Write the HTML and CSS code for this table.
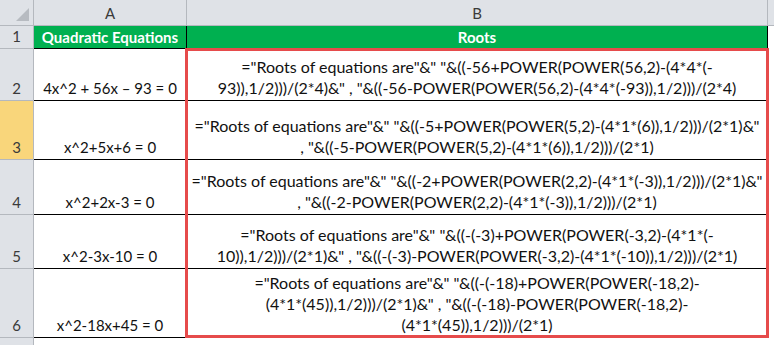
FILE: index.html
```html
<!DOCTYPE html>
<html lang="en">
<head>
  <meta charset="UTF-8">
  <meta name="viewport" content="width=device-width, initial-scale=1.0">
  <title>Quadratic Equations</title>
  <link rel="stylesheet" href="styles.css">
</head>
<body>

  <!-- Spreadsheet -->
  <div class="sheet">
    <div class="corner"><span class="corner-mark"></span></div>
    <div class="col-head">A</div>
    <div class="col-head">B</div>
    <div class="col-head col-rest"></div>

    <div class="row-head">1</div>
    <div class="cell title">Quadratic Equations</div>
    <div class="cell title">Roots</div>
    <div class="cell rest"></div>

    <div class="row-head">2</div>
    <div class="cell eq">4x^2 + 56x – 93 = 0</div>
    <div class="cell formula">="Roots of equations are"&amp;" "&amp;((-56+POWER(POWER(56,2)-(4*4*(-<br>93)),1/2)))/(2*4)&amp;" , "&amp;((-56-POWER(POWER(56,2)-(4*4*(-93)),1/2)))/(2*4)</div>
    <div class="cell rest"></div>

    <div class="row-head selected">3</div>
    <div class="cell eq">x^2+5x+6 = 0</div>
    <div class="cell formula">="Roots of equations are"&amp;" "&amp;((-5+POWER(POWER(5,2)-(4*1*(6)),1/2)))/(2*1)&amp;"<br>, "&amp;((-5-POWER(POWER(5,2)-(4*1*(6)),1/2)))/(2*1)</div>
    <div class="cell rest"></div>

    <div class="row-head">4</div>
    <div class="cell eq">x^2+2x-3 = 0</div>
    <div class="cell formula">="Roots of equations are"&amp;" "&amp;((-2+POWER(POWER(2,2)-(4*1*(-3)),1/2)))/(2*1)&amp;"<br>, "&amp;((-2-POWER(POWER(2,2)-(4*1*(-3)),1/2)))/(2*1)</div>
    <div class="cell rest"></div>

    <div class="row-head">5</div>
    <div class="cell eq">x^2-3x-10 = 0</div>
    <div class="cell formula">="Roots of equations are"&amp;" "&amp;((-(-3)+POWER(POWER(-3,2)-(4*1*(-<br>10)),1/2)))/(2*1)&amp;" , "&amp;((-(-3)-POWER(POWER(-3,2)-(4*1*(-10)),1/2)))/(2*1)</div>
    <div class="cell rest"></div>

    <div class="row-head">6</div>
    <div class="cell eq">x^2-18x+45 = 0</div>
    <div class="cell formula">="Roots of equations are"&amp;" "&amp;((-(-18)+POWER(POWER(-18,2)-<br>(4*1*(45)),1/2)))/(2*1)&amp;" , "&amp;((-(-18)-POWER(POWER(-18,2)-<br>(4*1*(45)),1/2)))/(2*1)</div>
    <div class="cell rest"></div>

    <div class="row-head"></div>
    <div class="cell blank"></div>
    <div class="cell blank"></div>
    <div class="cell rest"></div>

    <!-- highlighted range B2:B6 -->
    <div class="range-box"></div>
  </div>

</body>
</html>
```

FILE: styles.css
```css
body {
  margin: 0;
  background: #fff;
  font-family: Lato, "Open Sans", sans-serif;
  overflow: hidden;
}

.sheet {
  position: relative;
  display: grid;
  grid-template-columns: 34px 153px 581px 1fr;
  grid-template-rows: 26px 23px 52px 59px 55px 54px 69px 20px;
  width: 774px;
  height: 345px;
  overflow: hidden;
}

.sheet > div {
  box-sizing: border-box;
}

/* headers */
.corner,
.col-head,
.row-head {
  background: #dfe2e7;
  border-right: 1px solid #b4b8be;
  border-bottom: 1px solid #b4b8be;
  color: #3a3a3a;
  font-size: 15px;
}

.corner {
  display: flex;
  justify-content: flex-end;
  align-items: flex-end;
  padding: 0 4px 4px 0;
}

.corner-mark {
  width: 0;
  height: 0;
  border-left: 13px solid transparent;
  border-bottom: 13px solid #b7bbc1;
}

.col-head {
  display: flex;
  justify-content: center;
  align-items: center;
  padding-top: 1px;
}

.col-rest {
  border-right: none;
}

.row-head {
  display: flex;
  justify-content: center;
  align-items: flex-end;
  line-height: 20px;
  padding-bottom: 2px;
}

.row-head.selected {
  background: #f9d67b;
}

/* cells */
.cell {
  border-right: 1px solid #000;
  border-bottom: 1px solid #000;
  color: #111;
  font-size: 14px;
  line-height: 20px;
  text-align: center;
}

.title {
  background: #00b050;
  color: #fff;
  font-weight: bold;
  font-size: 15px;
  display: flex;
  justify-content: center;
  align-items: center;
}

.eq {
  display: flex;
  justify-content: center;
  align-items: flex-end;
  padding-bottom: 2px;
  font-size: 15px;
}

.formula {
  display: flex;
  flex-direction: column;
  justify-content: flex-end;
  padding: 0 2px 2px;
  white-space: nowrap;
  font-size: 16px;
  line-height: 21px;
}

.blank {
  border: none;
}

.rest {
  border: none;
}

.range-box {
  position: absolute;
  left: 185px;
  top: 48px;
  width: 584px;
  height: 290px;
  box-sizing: border-box;
  border: 3px solid #e64b4b;
  pointer-events: none;
}
```
